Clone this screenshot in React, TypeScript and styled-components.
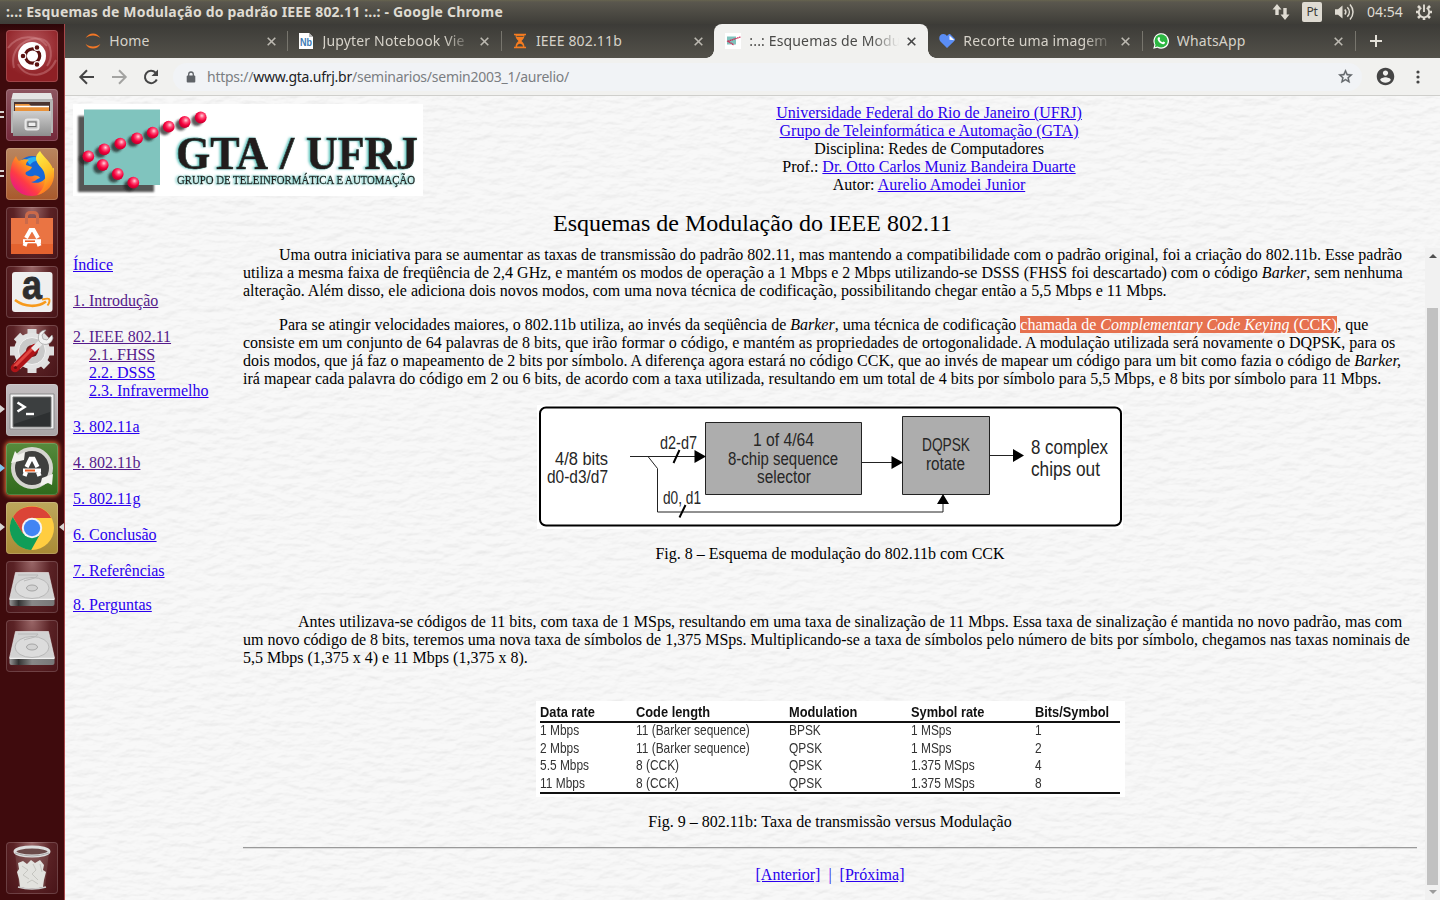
import React from 'react';
import styled, { createGlobalStyle, css } from 'styled-components';

const GlobalStyle = createGlobalStyle`
  *, *::before, *::after { box-sizing: border-box; }
  html, body { margin: 0; padding: 0; height: 900px; overflow: hidden; }
  body { background: #f4f4f4; }
`;

const uiFont = `'Noto Sans', 'Open Sans', sans-serif`;

/* ---------- desktop shell ---------- */

const Desktop = styled.div`
  width: 1440px;
  height: 900px;
  display: flex;
  flex-direction: column;
  overflow: hidden;
  font-family: ${uiFont};
`;

const SystemBar = styled.header`
  height: 24px;
  flex: none;
  display: flex;
  align-items: center;
  justify-content: space-between;
  padding: 0 7px 0 6px;
  color: #dfdbd2;
  background: linear-gradient(#67644f 0, #5a574e 2px, #3e3d38 100%);
`;

const WindowTitle = styled.div`
  font-size: 14px;
  font-weight: 700;
  line-height: 24px;
  letter-spacing: 0.19px;
  white-space: nowrap;
`;

const Indicators = styled.div`
  display: flex;
  align-items: center;
  height: 24px;
`;

const KeyboardLayout = styled.span`
  width: 20px;
  height: 20px;
  margin: 0 12px 0 12px;
  border-radius: 2px;
  background: #dfdbd2;
  color: #3c3b37;
  font-size: 12px;
  line-height: 20px;
  letter-spacing: -0.3px;
  text-align: center;
`;

const Clock = styled.span`
  width: 37px;
  margin: 0 11px 0 12px;
  font-size: 14px;
  line-height: 24px;
  white-space: nowrap;
`;

const Workspace = styled.div`
  flex: 1;
  display: flex;
  min-height: 0;
`;

/* ---------- launcher ---------- */

const Launcher = styled.nav`
  width: 65px;
  flex: none;
  display: flex;
  flex-direction: column;
  gap: 7px;
  padding: 6px 0 6px 6px;
  background: linear-gradient(#2c0608 0, #3f0b0d 10px, #3f0b0d 100%);
  border-right: 1px solid #a8484b;
`;

const Tile = styled.div<{ $bg: string; $glow?: boolean; $bottom?: boolean }>`
  position: relative;
  width: 52px;
  height: 52px;
  flex: none;
  border-radius: 4px;
  background: ${p => p.$bg};
  box-shadow: inset 0 0 0 1px rgba(255, 255, 255, 0.17)${p => (p.$glow ? ', 0 0 4px 1px #e8743a' : '')};
  ${p => p.$bottom && css`margin-top: auto;`}
  & > svg { display: block; }
`;

const RunningMark = styled.i<{ $kind: 'pips' | 'arrow' | 'active' | 'focus' }>`
  position: absolute;
  top: 21px;
  left: -6px;
  ${p => p.$kind === 'pips' && css`
    top: 22px; width: 4px; height: 7px;
    border-top: 2px solid #d9d5d3; border-bottom: 2px solid #d9d5d3;
  `}
  ${p => (p.$kind === 'arrow' || p.$kind === 'active') && css`
    border: 4px solid transparent; border-right: 0;
    border-left: 5px solid ${p.$kind === 'active' ? '#7ec5f0' : '#d9d5d3'};
  `}
  ${p => p.$kind === 'focus' && css`
    left: 53px; border: 4px solid transparent; border-left: 0; border-right: 5px solid #d9d5d3;
  `}
`;

/* ---------- browser chrome ---------- */

const Browser = styled.main`
  flex: 1;
  min-width: 0;
  display: flex;
  flex-direction: column;
`;

const TabStrip = styled.div`
  height: 34px;
  flex: none;
  display: flex;
  padding-left: 9px;
  background: linear-gradient(#3c3b37, #53514a);
`;

const Tab = styled.div<{ $active?: boolean; $divider?: boolean }>`
  position: relative;
  width: ${p => (p.$active ? 214 : 213.4)}px;
  flex: none;
  display: flex;
  align-items: center;
  padding: 0 0 0 11px;
  color: ${p => (p.$active ? '#4a4a48' : '#d6d2c9')};
  ${p => p.$active && css`
    background: #f1f1ef;
    border-radius: 8px 8px 0 0;
    &::before, &::after {
      content: '';
      position: absolute;
      bottom: 0;
      width: 8px;
      height: 8px;
    }
    &::before { left: -8px; background: radial-gradient(circle at 0 0, transparent 7.5px, #f1f1ef 8px); }
    &::after { right: -8px; background: radial-gradient(circle at 100% 0, transparent 7.5px, #f1f1ef 8px); }
  `}
  ${p => p.$divider && css`
    &::after {
      content: '';
      position: absolute;
      right: -1px;
      top: 7px;
      width: 1px;
      height: 20px;
      background: #77756d;
    }
  `}
`;

const Favicon = styled.span`
  width: 16px;
  height: 16px;
  margin-right: 8.2px;
  flex: none;
  & > svg { display: block; }
`;

const TabTitle = styled.span<{ $fade?: boolean }>`
  width: 150px;
  margin-right: 7.6px;
  flex: none;
  overflow: hidden;
  white-space: nowrap;
  font-size: 14px;
  line-height: 20px;
  letter-spacing: 0.15px;
  ${p => p.$fade && css`mask-image: linear-gradient(to right, #000 122px, transparent 150px);`}
`;

const Toolbar = styled.div`
  height: 38px;
  flex: none;
  display: flex;
  align-items: center;
  padding-left: 12px;
  background: #f1f1ef;
  border-bottom: 1px solid #cfcfcc;
  & > svg { flex: none; margin-right: 12px; }
`;

const Omnibox = styled.div`
  height: 28px;
  width: 1190px;
  display: flex;
  align-items: center;
  justify-content: space-between;
  padding: 0 8px 0 13px;
  margin-right: 13px;
  border-radius: 14px;
  background: #f1f3f6;
`;

const Address = styled.div`
  display: flex;
  align-items: center;
  gap: 11px;
  color: #7b7e82;
  font-size: 14px;
  line-height: 20px;
  letter-spacing: -0.25px;
  white-space: nowrap;
  b { font-weight: 400; color: #202124; }
`;

/* ---------- page frames ---------- */

const Page = styled.div`
  position: relative;
  flex: 1;
  min-height: 0;
  display: flex;
  flex-direction: column;
  font: 16px/18px 'Liberation Serif', 'Times New Roman', serif;
  color: #000;
`;

const Paper = styled.svg`
  position: absolute;
  inset: 0;
  z-index: -1;
`;

const TopFrame = styled.header`
  height: 150px;
  flex: none;
  padding: 8px 8px 0;
`;

const Masthead = styled.div`
  display: flex;
  height: 92px;
  & > svg { display: block; flex: none; margin-right: 3px; }
`;

const Credits = styled.div`
  flex: 1;
  text-align: center;
`;

const PageTitle = styled.h1`
  margin: 14px 0 0;
  font-size: 24px;
  font-weight: 400;
  line-height: 27px;
  text-align: center;
`;

const Link = styled.span<{ $visited?: boolean }>`
  color: ${p => (p.$visited ? '#551a8b' : '#2a00ee')};
  text-decoration: underline;
`;

const Frames = styled.div`
  flex: 1;
  min-height: 0;
  display: flex;
`;

const IndexFrame = styled.nav`
  width: 170px;
  flex: none;
  display: flex;
  flex-direction: column;
  padding: 10px 0 0 8px;
`;

const IndexItem = styled.div<{ $sub?: boolean; $gap?: number }>`
  padding-left: ${p => (p.$sub ? 16 : 0)}px;
  margin-bottom: ${p => p.$gap ?? 18}px;
  white-space: nowrap;
`;

const Article = styled.article`
  flex: 1;
  min-width: 0;
  padding: 0 8px;
`;

const Paragraph = styled.p<{ $indent?: number; $after: number }>`
  margin: 0 0 ${p => p.$after}px;
  text-indent: ${p => p.$indent ?? 36}px;
`;

const Selected = styled.span`
  background: #e6714f;
  color: #fff;
`;

const Figure = styled.figure<{ $gap: number; $after: number }>`
  margin: 0 0 ${p => p.$after}px;
  display: flex;
  flex-direction: column;
  align-items: center;
  gap: ${p => p.$gap}px;
  & > svg { display: block; }
`;

const RateTable = styled.div`
  width: 589px;
  height: 96px;
  padding: 1px 5px 0 4px;
  background: #fff;
  font-family: 'Liberation Sans', sans-serif;
  font-size: 15px;
  color: #333;
`;

const RateRow = styled.div<{ $head?: boolean }>`
  display: grid;
  grid-template-columns: 96.5px 153px 122px 124px 1fr;
  line-height: 17.5px;
  height: 17.5px;
  white-space: nowrap;
  ${p => p.$head && css`
    height: 21px;
    line-height: 20px;
    font-weight: 700;
    color: #111;
    border-bottom: 2px solid #111;
  `}
  & > span {
    transform: scaleX(${p => (p.$head ? 0.855 : 0.795)});
    transform-origin: 0 50%;
  }
`;

const RateBody = styled.div`
  height: 71px;
  border-bottom: 2px solid #111;
  & > div { position: relative; top: -2px; }
`;

const Rule = styled.hr`
  margin: 0 0 17px;
  height: 2px;
  border: 0;
  border-top: 1px solid #9a9a9a;
  border-bottom: 1px solid #dcdcdc;
`;

const Pager = styled.div`
  text-align: center;
  color: #2a00ee;
`;

const Scrollbar = styled.div`
  width: 15px;
  flex: none;
  display: flex;
  flex-direction: column;
  align-items: center;
  margin-top: 2px;
  background: #f1f1f1;
`;

const ScrollArrow = styled.i<{ $down?: boolean }>`
  margin: ${p => (p.$down ? '5px 0 0' : '6px 0 50px')};
  border: 4px solid transparent;
  ${p => (p.$down
    ? css`border-top-color: #9c9c9c; border-bottom: 0;`
    : css`border-bottom-color: #505050; border-top: 0;`)}
`;

const Thumb = styled.div`
  width: 11px;
  height: 577px;
  background: #c1c1c1;
`;

/* ---------- drawings ---------- */

const CloseIcon = ({ dark }: { dark?: boolean }) => (
  <svg width="9" height="9" viewBox="0 0 9 9">
    <path d="M.7.7l7.6 7.6M8.3.7L.7 8.3" stroke={dark ? '#454545' : '#bcb9b1'} strokeWidth="1.6" />
  </svg>
);

const JupyterIcon = () => (
  <svg width="16" height="16" viewBox="0 0 16 16" fill="#f37726">
    <path d="M.5 5.300C2.200 2 5 .5 8 .5s5.800 1.500 7.500 4.800C13.500 3.500 11 2.600 8 2.600S2.500 3.500.5 5.300z" />
    <path d="M.5 10.700c1.700 3.300 4.500 4.800 7.500 4.800s5.800-1.500 7.500-4.800c-2 1.800-4.500 2.700-7.500 2.700s-5.500-.9-7.500-2.700z" />
  </svg>
);

const NotebookIcon = () => (
  <svg width="16" height="16" viewBox="0 0 16 16">
    <path d="M1 0h10l4 4v12H1z" fill="#fff" />
    <path d="M11 0v4h4z" fill="#b8b8b8" />
    <text x="2" y="13" fontFamily="Liberation Sans" fontSize="11" fontWeight="700" fill="#3d7ab5" textLength="12" lengthAdjust="spacingAndGlyphs">Nb</text>
  </svg>
);

const HourglassIcon = () => (
  <svg width="16" height="16" viewBox="0 0 16 16">
    <path d="M2 1.500h12M2 14.500h12" stroke="#f57c20" strokeWidth="1.400" />
    <path d="M3.500 2h9c0 3-1.300 4.500-3 6 1.700 1.500 3 3 3 6h-9c0-3 1.300-4.500 3-6-1.700-1.500-3-3-3-6z" fill="#f57c20" />
    <path d="M4.500 3.400h7" stroke="#47463f" strokeWidth=".9" />
    <path d="M5 13.600c.4-2 1.500-2.900 3-2.900s2.600.9 3 2.900z" fill="#47463f" />
  </svg>
);

const GtaIcon = () => (
  <svg width="16" height="16" viewBox="0 0 16 16">
    <path d="M0 0h16v16H0z" fill="#fff" />
    <path d="M2 3.500h9v8H2z" fill="#7fc2bc" />
    <path d="M15.500 4L3 8.200 9 12" stroke="#cf2350" strokeWidth="1.300" strokeDasharray="1.500 .5" fill="none" />
  </svg>
);

const HeartIcon = () => (
  <svg width="16" height="16" viewBox="0 0 16 16">
    <path d="M8 15L1.200 8.200C-1 5 .8 1 4.300 1 6 1 7 1.700 8 3c1.200-1.500 2-2 3-2l5 5c0 1-.3 1.600-1.200 2.500z" fill="#5a8df5" />
    <path d="M10.500 2.500l5 4.800-5-.5z" fill="#fff" />
  </svg>
);

const WhatsAppIcon = () => (
  <svg width="16" height="16" viewBox="0 0 16 16">
    <path d="M.2 15.800l1.200-4A7.800 7.800 0 1 1 4.400 14.800z" fill="#fff" />
    <circle cx="8.100" cy="7.900" r="6.600" fill="#2cb742" />
    <path d="M1.900 14.200l.9-3.100 2.200 2.200z" fill="#2cb742" />
    <path d="M5.600 4.200c.8-.4 1 .2 1.500 1.500.1.400-.6.800-.5 1.100.6 1.200 1.500 2 2.700 2.500.4.100.8-.9 1.100-.8l1.600.8c.2.700-.6 1.900-1.700 1.900-2.900 0-6-3.300-5.700-5.600.1-.6.500-1.200 1-1.400z" fill="#fff" />
  </svg>
);

const BackIcon = ({ color, flip }: { color: string; flip?: boolean }) => (
  <svg width="20" height="20" viewBox="0 0 20 20">
    <path d="M17 10H4M10 3.300L3.300 10 10 16.700" transform={flip ? 'matrix(-1 0 0 1 20 0)' : undefined} fill="none" stroke={color} strokeWidth="2" />
  </svg>
);

const ReloadIcon = () => (
  <svg width="20" height="20" viewBox="0 0 20 20">
    <path d="M15.800 12.500A6.200 6.200 0 1 1 14.600 5.600" fill="none" stroke="#454545" strokeWidth="2" />
    <path d="M17 2.500V9h-6.500z" fill="#454545" />
  </svg>
);

const LockIcon = () => (
  <svg width="10" height="12" viewBox="0 0 10 12">
    <rect x=".7" y="4.500" width="8.600" height="7" rx="1" fill="#5f6368" />
    <path d="M2.700 5V3.300a2.300 2.300 0 0 1 4.600 0V5" fill="none" stroke="#5f6368" strokeWidth="1.300" />
  </svg>
);

const StarIcon = () => (
  <svg width="17" height="17" viewBox="0 0 24 24" fill="#5f6368">
    <path d="M22 9.240l-7.190-.62L12 2 9.190 8.630 2 9.240l5.460 4.730L5.820 21 12 17.270 18.180 21l-1.630-7.030L22 9.240zM12 15.400l-3.760 2.270 1-4.280-3.320-2.880 4.380-.38L12 6.100l1.710 4.040 4.380.38-3.320 2.880 1 4.280L12 15.400z" stroke="#5f6368" strokeWidth=".5" />
  </svg>
);

const ProfileIcon = () => (
  <svg width="21" height="21" viewBox="0 0 24 24" fill="#454545">
    <path d="M12 2C6.480 2 2 6.480 2 12s4.480 10 10 10 10-4.480 10-10S17.520 2 12 2zm0 3c1.660 0 3 1.340 3 3s-1.340 3-3 3-3-1.340-3-3 1.340-3 3-3zm0 14.200c-2.500 0-4.710-1.280-6-3.220.03-1.990 4-3.080 6-3.080 1.990 0 5.970 1.090 6 3.080-1.290 1.940-3.500 3.220-6 3.220z" />
  </svg>
);

const MoreIcon = () => (
  <svg width="20" height="20" viewBox="0 0 20 20" fill="#454545">
    <circle cx="10" cy="5" r="1.600" /><circle cx="10" cy="10" r="1.600" /><circle cx="10" cy="15" r="1.600" />
  </svg>
);

const NetworkIcon = () => (
  <svg width="18" height="18" viewBox="0 0 18 18" fill="#dfdbd2">
    <path d="M5 1l4.500 5.500H6.700V12H3.300V6.500H.5z" />
    <path d="M13 17l-4.500-5.500h2.800V5h3.400v6.500h2.800z" />
  </svg>
);

const VolumeIcon = () => (
  <svg width="21" height="18" viewBox="0 0 21 18">
    <path d="M1 6.300h3L8.500 2.500v13L4 11.700H1z" fill="#dfdbd2" />
    <path d="M10.800 6.500c1.300 1.500 1.300 3.500 0 5M13.300 4.300c2.700 2.800 2.700 6.600 0 9.400M16 1.500c4 4.500 4 10.500 0 15" fill="none" stroke="#dfdbd2" strokeWidth="1.500" />
  </svg>
);

const SessionIcon = () => (
  <svg width="18" height="18" viewBox="0 0 18 18">
    <g stroke="#dfdbd2" fill="none">
      <path d="M11.700 4.700a5.200 5.200 0 1 1-5.400 0" strokeWidth="1.900" />
      <path d="M9 1.500V9" strokeWidth="1.900" />
      <path d="M14.300 9H17M1 9h2.700M12.800 12.800l2.200 2.200M5.200 12.800L3 15M9 14.300V17M13 5l2-2M5 5L3 3" strokeWidth="2.600" />
    </g>
  </svg>
);

const UbuntuArt = () => (
  <svg width="52" height="52" viewBox="0 0 52 52">
    <g fill="none" stroke="#e2a4a7" strokeOpacity=".35" strokeWidth="2">
      <path d="M8 38C3 18 22 4 38 10c8 4 9 18 3 26" />
      <path d="M2 18C12 4 32 4 41 16M50 30C42 48 20 50 12 34" />
    </g>
    <circle cx="26" cy="26" r="14" fill="#fff" />
    <circle cx="26.500" cy="26" r="7.200" fill="none" stroke="#5a1210" strokeWidth="3.200" />
    <g fill="#5a1210" stroke="#fff" strokeWidth="1.200">
      <circle cx="17" cy="26" r="2.900" /><circle cx="31" cy="17.500" r="2.900" /><circle cx="31" cy="34.500" r="2.900" />
    </g>
  </svg>
);

const FilesArt = () => (
  <svg width="52" height="52" viewBox="0 0 52 52">
    <path d="M7 4h38l2 8v32H5V12z" fill="#b5b5b5" />
    <path d="M7 4h38l1.500 6h-41z" fill="#e4e4e4" />
    <path d="M8 13h36v10H8z" fill="#4a3430" />
    <path d="M9 15h14l2 2h18v7H9z" fill="#e8923a" />
    <path d="M9 17.500h34" stroke="#fff" strokeWidth="1.500" />
    <path d="M7 22h38v25H7z" fill="url(#drawer)" />
    <rect x="19.500" y="30.500" width="13" height="10" rx="2" fill="#bdbdbd" stroke="#e8e8e8" strokeWidth="2" />
    <rect x="22" y="33" width="8" height="4.500" fill="#eee" stroke="#666" />
    <defs><linearGradient id="drawer" x2="0" y2="1"><stop stopColor="#cfcfcf" /><stop offset="1" stopColor="#8e8e8e" /></linearGradient></defs>
  </svg>
);

const FirefoxArt = () => (
  <svg width="52" height="52" viewBox="0 0 52 52">
    <defs>
      <linearGradient id="fox" x1=".9" y1=".1" x2=".1" y2=".9">
        <stop stopColor="#ffe03a" /><stop offset=".4" stopColor="#ff9a1c" /><stop offset=".7" stopColor="#ff3b45" /><stop offset="1" stopColor="#e5158a" />
      </linearGradient>
      <linearGradient id="tail" x1="0" y1="0" x2=".3" y2="1"><stop stopColor="#fff04a" /><stop offset=".6" stopColor="#ffc226" /><stop offset="1" stopColor="#ff7a20" /></linearGradient>
    </defs>
    <circle cx="26" cy="24" r="16" fill="#1668d8" />
    <path d="M20 12c6-5 14-3 16 1-5-1-10 0-12 4z" fill="#28b0f5" />
    <path d="M5 20c1-6 3-9 5-12 1 3 2 4 3 5 4-2 7-2 10-1-2 1-3 3-3 5l6 2c-1 3-4 4-6 5-2 3 3 5 7 4 3-1 6 0 7 2-4 1-5 4-9 4 8 3 17-2 17-12l6-2c0 16-9 28-22 28C12 48 1 36 5 20z" fill="url(#fox)" />
    <path d="M34 3c3 6 13 12 14 22 1 11-7 20-17 22 7-6 10-14 7-23-2-5-8-8-8-14 0-3 2-5 4-7z" fill="url(#tail)" />
  </svg>
);

const SoftwareArt = () => (
  <svg width="52" height="52" viewBox="0 0 52 52">
    <path d="M5 11h42v36H5z" fill="#ea7443" />
    <path d="M5 37h42v10H5z" fill="#e4622f" />
    <path d="M20.500 17V9.500q0-4 4-4h3q4 0 4 4V17" fill="none" stroke="#cb6a4a" strokeWidth="3" />
    <path d="M20 31l4.500-8h3l4.500 8M18.500 39l1.500-4M33.500 39L32 35" fill="none" stroke="#fff" strokeWidth="4" />
    <path d="M17 34.200h18" stroke="#fff" strokeWidth="4" />
    <path d="M19 34.200h10" stroke="#ea5b22" strokeWidth="1.600" />
  </svg>
);

const AmazonArt = () => (
  <svg width="52" height="52" viewBox="0 0 52 52">
    <rect x="6" y="6" width="40.500" height="40" rx="3" fill="#efefef" />
    <text x="16" y="33" fontFamily="Liberation Sans" fontWeight="700" fontSize="41" textLength="20" lengthAdjust="spacingAndGlyphs" fill="#2e2e2e" stroke="#2e2e2e" strokeWidth=".8">a</text>
    <path d="M9 34c10 7.500 23 7.500 31 1.500" fill="none" stroke="#f79a1c" strokeWidth="2.600" />
    <path d="M36 33.500c4-1 6-1.500 7-.5s.5 4-1.500 6.500" fill="none" stroke="#f79a1c" strokeWidth="2" />
  </svg>
);

const SettingsArt = () => (
  <svg width="52" height="52" viewBox="0 0 52 52">
    <g stroke="#dedede" strokeWidth="9">
      <path d="M26 4v44M4 26h44M11 11l30 30M41 11L11 41" />
    </g>
    <circle cx="26" cy="26" r="18" fill="#e2e2e2" />
    <circle cx="26" cy="26" r="13.500" fill="#c9c9c9" stroke="#f2f2f2" />
    <circle cx="26" cy="26" r="6" fill="#6d1a1c" />
    <path d="M9 43L29 23" stroke="#b01418" strokeWidth="8.500" strokeLinecap="round" />
    <path d="M9 41L27 23" stroke="#e04640" strokeWidth="3" strokeLinecap="round" />
    <path d="M27 25l8-8" stroke="#e9e9e9" strokeWidth="5.500" />
    <path d="M40 5c-6 0-9 5-7 11 3 5 12 5 14-3l-1-3-5 5-4-1-1-4z" fill="#f2f2f2" stroke="#999" strokeWidth=".7" />
    <circle cx="9.500" cy="42.500" r="1.600" fill="#6b0d0f" />
  </svg>
);

const TerminalArt = () => (
  <svg width="52" height="52" viewBox="0 0 52 52">
    <path d="M4 10h44v35H4z" fill="#f2f2f2" stroke="#8b8b8b" />
    <path d="M7 13h38v30H7z" fill="#2d3031" stroke="#777" />
    <path d="M8 14h36v14L8 40z" fill="#3c3f40" />
    <path d="M11.500 18.500l7 4.500-7 4.500" fill="none" stroke="#fff" strokeWidth="2.600" />
    <path d="M20 30h8" stroke="#fff" strokeWidth="2.400" />
  </svg>
);

const UpdaterArt = () => (
  <svg width="52" height="52" viewBox="0 0 52 52">
    <circle cx="26" cy="25" r="19" fill="#3f403e" stroke="#d5d5d0" strokeWidth="4" />
    <path d="M5 20L9 8l3 4 7-3-1 8z" fill="#f2f2ee" />
    <path d="M47 31l-1 11-4-2-8 3 2-8z" fill="#f2f2ee" />
    <path d="M20.500 24l4-8h3l4 8M18.500 33l1.500-4M33.500 33L32 29" fill="none" stroke="#fff" strokeWidth="4.300" />
    <path d="M17 27.500h18" stroke="#fff" strokeWidth="4" />
    <path d="M19 27.500h10" stroke="#ea5b22" strokeWidth="2" />
  </svg>
);

const ChromeArt = () => (
  <svg width="52" height="52" viewBox="0 0 52 52">
    <circle cx="26" cy="26" r="22" fill="#ffcd40" />
    <path d="M7 15A22 22 0 0 1 45.200 16H26L16.500 31.500z" fill="#db4437" />
    <path d="M6.800 15a22 22 0 0 0 18.400 33l9.500-17L26 36 16.500 31z" fill="#109d58" />
    <circle cx="26" cy="26" r="10.200" fill="#f4f4f4" />
    <circle cx="26" cy="26" r="8.200" fill="#4285f4" />
  </svg>
);

const DriveArt = () => (
  <svg width="52" height="52" viewBox="0 0 52 52">
    <path d="M9.500 11.500h33L48.500 38H3.500z" fill="#d2d2d2" stroke="#eee" strokeWidth=".6" />
    <path d="M3.500 38.500h45V43q0 2-2 2h-41q-2 0-2-2z" fill="url(#edge)" />
    <path d="M3.500 38.500h45" stroke="#f2f2f2" />
    <ellipse cx="26" cy="27" rx="17" ry="10.500" fill="#dcdcdc" stroke="#b8b8b8" />
    <path d="M12 14h20c-2 4-9 4-14 6" fill="none" stroke="#b8b8b8" />
    <ellipse cx="26" cy="27" rx="5.500" ry="3" fill="#d2d2d2" stroke="#a5a5a5" />
    <defs><linearGradient id="edge"><stop stopColor="#999" /><stop offset=".2" stopColor="#333" /><stop offset=".5" stopColor="#888" /><stop offset="1" stopColor="#777" /></linearGradient></defs>
  </svg>
);

const TrashArt = () => (
  <svg width="52" height="52" viewBox="0 0 52 52">
    <path d="M9 10h34l-4 36q-13 3-26 0z" fill="#8a6a68" fillOpacity=".35" />
    <path d="M12 21l5-2 4 3 4-4 4 3 5-3 4 5-1 5 3 2-2 8-1 7q-11 3-23 0l-1-8-2-7 2-3z" fill="#e2e2de" />
    <path d="M16 24l6 4-5 5 6 4M27 22l3 6-4 4 6 6M34 22l2 8M21 41l5-3 6 4" stroke="#c6c6c1" fill="none" />
    <ellipse cx="26" cy="9.500" rx="17" ry="4.500" fill="#6a4a49" stroke="#ddd" strokeWidth="3" />
    <path d="M9 11q17 6 34 0" stroke="#aaa" fill="none" />
    <path d="M12 45q14 4 28 0" stroke="#ccc" strokeWidth="1.500" fill="none" />
  </svg>
);

const beads = [
  [127.7, 13.5], [111.7, 18], [95.700, 22.700], [79.700, 28.700], [64, 34.300], [47.300, 39.700],
  [31.300, 45.300], [15.300, 52.300], [29.700, 61], [44.700, 70], [60.300, 78.700],
];

const GtaLogo = () => (
  <svg width="350" height="92" viewBox="0 0 350 92">
    <defs>
      <radialGradient id="bead" cx=".6" cy=".35" r=".6">
        <stop stopColor="#ffd5de" /><stop offset=".35" stopColor="#ff4c76" /><stop offset=".7" stopColor="#f5003c" /><stop offset="1" stopColor="#c80030" />
      </radialGradient>
      <filter id="soft" x="-30%" y="-30%" width="160%" height="160%"><feGaussianBlur stdDeviation="1.300" /></filter>
      <filter id="halo" x="-5%" y="-10%" width="110%" height="120%">
        <feDropShadow dx="-1.500" dy="0" stdDeviation="1.200" floodColor="#5fc4bd" />
      </filter>
    </defs>
    <path d="M0 0h350v92H0z" fill="#fff" />
    <path d="M5 12h76v76H5z" fill="#555" filter="url(#soft)" />
    <path d="M11 5.500h76V81H11z" fill="#80c4be" />
    {beads.map(([x, y]) => (
      <circle key={x} cx={x - 4} cy={y + 3} r="5.500" fill="#222" fillOpacity=".75" filter="url(#soft)" />
    ))}
    {beads.map(([x, y]) => <circle key={x} cx={x} cy={y} r="5.900" fill="url(#bead)" />)}
    <g fontFamily="Liberation Serif" fill="#241f1c" stroke="#241f1c" filter="url(#halo)">
      <g fontWeight="700" fontSize="47" strokeWidth=".7">
        <text x="103" y="64.500" textLength="92" lengthAdjust="spacingAndGlyphs">GTA</text>
        <text x="207" y="64.500" textLength="14" lengthAdjust="spacingAndGlyphs">/</text>
        <text x="233" y="64.500" textLength="112" lengthAdjust="spacingAndGlyphs">UFRJ</text>
      </g>
      <text x="104" y="80" fontSize="12.500" strokeWidth=".4" textLength="238" lengthAdjust="spacingAndGlyphs">GRUPO DE TELEINFORMÁTICA E AUTOMAÇÃO</text>
    </g>
  </svg>
);

const labels: [string, number, number, number, number][] = [
  ['4/8 bits', 18, 60, 53, 18], ['d0-d3/d7', 10, 78, 61, 18], ['d2-d7', 123, 43.500, 37, 18], ['d0, d1', 126, 98.500, 38, 18],
  ['1 of 4/64', 216, 41, 61, 18], ['8-chip sequence', 191, 60, 110, 18], ['selector', 220, 78, 54, 18],
  ['DQPSK', 385, 46, 48, 18.500], ['rotate', 389, 65, 39, 18], ['8 complex', 494, 49, 77, 20], ['chips out', 494, 71, 69, 20],
];

const CckDiagram = () => (
  <svg width="586" height="124" viewBox="0 0 586 124">
    <path d="M0 0h586v124H0z" fill="#fff" />
    <rect x="3" y="2.500" width="581" height="118" rx="6" fill="none" stroke="#000" strokeWidth="2" />
    <g stroke="#222" fill="none">
      <path d="M93 51.500h70M111 51.500l9.500 12v43.500h285.500v-10M325 57.500h33M453 50.500h25" />
      <path d="M168.500 17.500h156v72h-156zM365.500 11.500h87v78h-87z" fill="#adadad" />
    </g>
    <path d="M157.500 45v13l11.500-6.500zM354.500 51v13l11.500-6.500zM476 44v13l11-6.500zM400 99h12l-6-10z" fill="#000" />
    <path d="M136.500 58l6-13M142.500 112.500l6-12.500" stroke="#000" strokeWidth="2" />
    <g fill="#262626" fontFamily="Liberation Sans">
      {labels.map(([t, x, y, w, s]) => (
        <text key={t} x={x} y={y} fontSize={s} textLength={w} lengthAdjust="spacingAndGlyphs">{t}</text>
      ))}
    </g>
  </svg>
);

const PaperTexture = () => (
  <Paper width="1375" height="804">
    <filter id="fibres" x="0" y="0" width="100%" height="100%" colorInterpolationFilters="sRGB">
      <feTurbulence type="fractalNoise" baseFrequency="0.06 0.14" numOctaves="4" seed="8" />
      <feDiffuseLighting surfaceScale="1.200" diffuseConstant="1.110" lightingColor="#fff" result="lit">
        <feDistantLight azimuth="70" elevation="60" />
      </feDiffuseLighting>
      <feComponentTransfer>
        <feFuncR type="linear" slope=".17" intercept=".803" />
        <feFuncG type="linear" slope=".17" intercept=".803" />
        <feFuncB type="linear" slope=".17" intercept=".803" />
      </feComponentTransfer>
    </filter>
    <rect width="1375" height="804" filter="url(#fibres)" />
  </Paper>
);

/* ---------- data ---------- */

const tabs = [
  { title: 'Home', icon: <JupyterIcon />, divider: true },
  { title: 'Jupyter Notebook Vie', icon: <NotebookIcon />, divider: true, fade: true },
  { title: 'IEEE 802.11b', icon: <HourglassIcon /> },
  { title: ':..: Esquemas de Modu', icon: <GtaIcon />, active: true, fade: true },
  { title: 'Recorte uma imagem c', icon: <HeartIcon />, divider: true, fade: true },
  { title: 'WhatsApp', icon: <WhatsAppIcon />, divider: true },
];

const glass = 'radial-gradient(ellipse at 50% 0, #9a6768 0, #5a2225 50%, #481418 100%)';

const index: { label: string; visited?: boolean; sub?: boolean; gap?: number }[] = [
  { label: 'Índice' },
  { label: '1. Introdução', visited: true },
  { label: '2. IEEE 802.11', visited: true, gap: 0 },
  { label: '2.1. FHSS', visited: true, sub: true, gap: 0 },
  { label: '2.2. DSSS', sub: true, gap: 0 },
  { label: '2.3. Infravermelho', sub: true },
  { label: '3. 802.11a' },
  { label: '4. 802.11b', visited: true },
  { label: '5. 802.11g' },
  { label: '6. Conclusão' },
  { label: '7. Referências', gap: 16 },
  { label: '8. Perguntas' },
];

const rates = [
  ['1 Mbps', '11 (Barker sequence)', 'BPSK', '1 MSps', '1'],
  ['2 Mbps', '11 (Barker sequence)', 'QPSK', '1 MSps', '2'],
  ['5.5 Mbps', '8 (CCK)', 'QPSK', '1.375 MSps', '4'],
  ['11 Mbps', '8 (CCK)', 'QPSK', '1.375 MSps', '8'],
];

export default function App() {
  return (
    <Desktop>
      <GlobalStyle />
      <SystemBar>
        <WindowTitle>:..: Esquemas de Modulação do padrão IEEE 802.11 :..: - Google Chrome</WindowTitle>
        <Indicators>
          <NetworkIcon />
          <KeyboardLayout>Pt</KeyboardLayout>
          <VolumeIcon />
          <Clock>04:54</Clock>
          <SessionIcon />
        </Indicators>
      </SystemBar>
      <Workspace>
        <Launcher>
          <Tile $bg="radial-gradient(circle at 50% 30%, #b85a5f, #8e2025 70%)"><UbuntuArt /></Tile>
          <Tile $bg="linear-gradient(#8d5560, #74283a)"><RunningMark $kind="pips" /><FilesArt /></Tile>
          <Tile $bg="linear-gradient(#b98660, #a9592c)"><RunningMark $kind="pips" /><FirefoxArt /></Tile>
          <Tile $bg={glass}><SoftwareArt /></Tile>
          <Tile $bg={glass}><AmazonArt /></Tile>
          <Tile $bg={glass}><SettingsArt /></Tile>
          <Tile $bg="linear-gradient(#c4bfc1, #a9a3a6)"><RunningMark $kind="arrow" /><TerminalArt /></Tile>
          <Tile $bg="linear-gradient(#568a3c, #2f6a1c)" $glow><RunningMark $kind="active" /><UpdaterArt /></Tile>
          <Tile $bg="linear-gradient(#bda75c, #a98a35)">
            <RunningMark $kind="arrow" /><RunningMark $kind="focus" /><ChromeArt />
          </Tile>
          <Tile $bg={glass}><DriveArt /></Tile>
          <Tile $bg={glass}><DriveArt /></Tile>
          <Tile $bg={glass} $bottom><TrashArt /></Tile>
        </Launcher>
        <Browser>
          <TabStrip>
            {tabs.map(t => (
              <Tab key={t.title} $active={t.active} $divider={t.divider}>
                <Favicon>{t.icon}</Favicon>
                <TabTitle $fade={t.fade}>{t.title}</TabTitle>
                <CloseIcon dark={t.active} />
              </Tab>
            ))}
            <svg width="44" height="34" viewBox="0 0 44 34">
              <path d="M21 11v12M15 17h12" stroke="#e4e1d9" strokeWidth="2" />
            </svg>
          </TabStrip>
          <Toolbar>
            <BackIcon color="#454545" />
            <BackIcon color="#a3a3a1" flip />
            <ReloadIcon />
            <Omnibox>
              <Address>
                <LockIcon />
                <span>https://<b>www.gta.ufrj.br</b>/seminarios/semin2003_1/aurelio/</span>
              </Address>
              <StarIcon />
            </Omnibox>
            <ProfileIcon />
            <MoreIcon />
          </Toolbar>
          <Page>
            <PaperTexture />
            <TopFrame>
              <Masthead>
                <GtaLogo />
                <Credits>
                  <div><Link>Universidade Federal do Rio de Janeiro (UFRJ)</Link></div>
                  <div><Link>Grupo de Teleinformática e Automação (GTA)</Link></div>
                  <div>Disciplina: Redes de Computadores</div>
                  <div>Prof.: <Link>Dr. Otto Carlos Muniz Bandeira Duarte</Link></div>
                  <div>Autor: <Link>Aurelio Amodei Junior</Link></div>
                </Credits>
              </Masthead>
              <PageTitle>Esquemas de Modulação do IEEE 802.11</PageTitle>
            </TopFrame>
            <Frames>
              <IndexFrame>
                {index.map(i => (
                  <IndexItem key={i.label} $sub={i.sub} $gap={i.gap}><Link $visited={i.visited}>{i.label}</Link></IndexItem>
                ))}
              </IndexFrame>
              <Article>
                <Paragraph $after={16}>
                  Uma outra iniciativa para se aumentar as taxas de transmissão do padrão 802.11, mas mantendo a compatibilidade
                  com o padrão original, foi a criação do 802.11b. Esse padrão utiliza a mesma faixa de freqüência de 2,4 GHz,
                  e mantém os modos de operação a 1 Mbps e 2 Mbps utilizando-se DSSS (FHSS foi descartado) com o
                  código <em>Barker</em>, sem nenhuma alteração. Além disso, ele adiciona dois novos modos, com uma nova técnica
                  de codificação, possibilitando chegar então a 5,5 Mbps e 11 Mbps.
                </Paragraph>
                <Paragraph $after={17}>
                  Para se atingir velocidades maiores, o 802.11b utiliza, ao invés da seqüência de <em>Barker</em>, uma técnica de
                  codificação <Selected>chamada de <em>Complementary Code Keying</em> (CCK)</Selected>, que consiste em um conjunto
                  de 64 palavras de 8 bits, que irão formar o código, e mantém as propriedades de ortogonalidade. A modulação
                  utilizada será novamente o DQPSK, para os dois modos, que já faz o mapeamento de 2 bits por símbolo. A diferença
                  agora estará no código CCK, que ao invés de mapear um código para um bit como fazia o código
                  de <em>Barker,</em> irá mapear cada palavra do código em 2 ou 6 bits, de acordo com a taxa utilizada, resultando
                  em um total de 4 bits por símbolo para 5,5 Mbps, e 8 bits por símbolo para 11 Mbps.
                </Paragraph>
                <Figure $gap={16} $after={50}>
                  <CckDiagram />
                  <figcaption>Fig. 8 – Esquema de modulação do 802.11b com CCK</figcaption>
                </Figure>
                <Paragraph $indent={55} $after={34}>
                  Antes utilizava-se códigos de 11 bits, com taxa de 1 MSps, resultando em uma taxa de sinalização de 11 Mbps. Essa
                  taxa de sinalização é mantida no novo padrão, mas com um novo código de 8 bits, teremos uma nova taxa de símbolos
                  de 1,375 MSps. Multiplicando-se a taxa de símbolos pelo número de bits por símbolo, chegamos nas taxas nominais
                  de 5,5 Mbps (1,375 x 4) e 11 Mbps (1,375 x 8).
                </Paragraph>
                <Figure $gap={16} $after={16}>
                  <RateTable>
                    <RateRow $head>
                      {['Data rate', 'Code length', 'Modulation', 'Symbol rate', 'Bits/Symbol'].map(h => <span key={h}>{h}</span>)}
                    </RateRow>
                    <RateBody>
                      {rates.map(r => (
                        <RateRow key={r[0]}>{r.map((c, i) => <span key={i}>{c}</span>)}</RateRow>
                      ))}
                    </RateBody>
                  </RateTable>
                  <figcaption>Fig. 9 – 802.11b: Taxa de transmissão versus Modulação</figcaption>
                </Figure>
                <Rule />
                <Pager><Link>[Anterior]</Link>&nbsp; |&nbsp; <Link>[Próxima]</Link></Pager>
              </Article>
              <Scrollbar>
                <ScrollArrow />
                <Thumb />
                <ScrollArrow $down />
              </Scrollbar>
            </Frames>
          </Page>
        </Browser>
      </Workspace>
    </Desktop>
  );
}
